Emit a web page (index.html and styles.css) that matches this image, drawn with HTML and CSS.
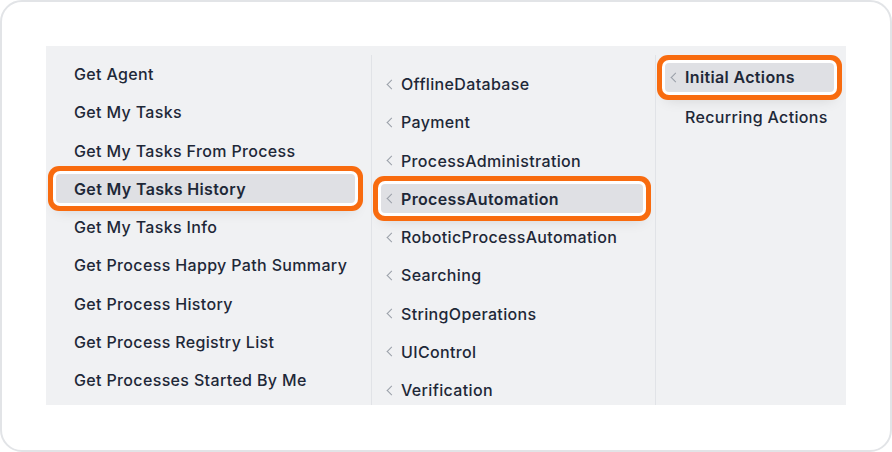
FILE: index.html
```html
<!DOCTYPE html>
<html>
<head>
<meta charset="utf-8">
<link rel="stylesheet" href="styles.css">
</head>
<body>
<div class="card">
  <div class="panel">
    <ul class="col col-1">
      <li class="item">Get Agent</li>
      <li class="item">Get My Tasks</li>
      <li class="item">Get My Tasks From Process</li>
      <li class="item active">Get My Tasks History</li>
      <li class="item">Get My Tasks Info</li>
      <li class="item">Get Process Happy Path Summary</li>
      <li class="item">Get Process History</li>
      <li class="item">Get Process Registry List</li>
      <li class="item">Get Processes Started By Me</li>
    </ul>
    <ul class="col col-2">
      <li class="item"><span class="chev"></span>OfflineDatabase</li>
      <li class="item"><span class="chev"></span>Payment</li>
      <li class="item"><span class="chev"></span>ProcessAdministration</li>
      <li class="item active"><span class="chev"></span>ProcessAutomation</li>
      <li class="item"><span class="chev"></span>RoboticProcessAutomation</li>
      <li class="item"><span class="chev"></span>Searching</li>
      <li class="item"><span class="chev"></span>StringOperations</li>
      <li class="item"><span class="chev"></span>UIControl</li>
      <li class="item"><span class="chev"></span>Verification</li>
    </ul>
    <ul class="col col-3">
      <li class="item active"><span class="chev"></span>Initial Actions</li>
      <li class="item"><span class="chev hidden"></span>Recurring Actions</li>
    </ul>
  </div>
</div>
</body>
</html>
```
FILE: styles.css
```css
* { box-sizing: border-box; }
html, body { margin: 0; padding: 0; background: #ffffff; }
body {
  font-family: Inter, "Noto Sans", sans-serif;
  color: #1e2838;
}
.card {
  width: 892px;
  height: 452px;
  border: 2px solid #e2e4e7;
  border-radius: 22px;
  padding: 44px 0 0 44px;
  background: #fff;
}
.panel {
  width: 800px;
  height: 359px;
  background: #f0f1f3;
  display: flex;
  padding-top: 9px;
}
.col {
  list-style: none;
  margin: 0;
  height: 100%;
  overflow: hidden;
}
.col-1 { width: 325px; padding: 4.5px 16px 0 10px; }
.col-2 { width: 284px; padding: 14.5px 12px 0 9px; border-left: 1px solid #e1e3e7; }
.col-3 { width: 191px; padding: 7.5px 12px 0 9px; border-left: 1px solid #e1e3e7; }
.item {
  height: 29px;
  margin-bottom: 9.25px;
  display: flex;
  align-items: center;
  font-size: 16px;
  font-weight: 500;
  letter-spacing: 0.35px;
  border-radius: 4px;
  white-space: nowrap;
}
.col-3 .item { margin-bottom: 10.5px; }
.col-1 .item { padding-left: 18px; }
.col-2 .item, .col-3 .item { padding-left: 5px; }
.chev {
  width: 7px;
  height: 7px;
  border-left: 1.6px solid #9a9fa8;
  border-bottom: 1.6px solid #9a9fa8;
  transform: rotate(45deg);
  margin-left: 2px;
  margin-right: 6px;
  flex: none;
}
.chev.hidden { visibility: hidden; }
.item.active {
  background: #dfe0e4;
  font-weight: 600;
  box-shadow: 0 0 0 3px #ffffff, 0 0 0 8px #f86b0f, 0 8px 14px rgba(0, 0, 0, 0.12);
  position: relative;
}
```
